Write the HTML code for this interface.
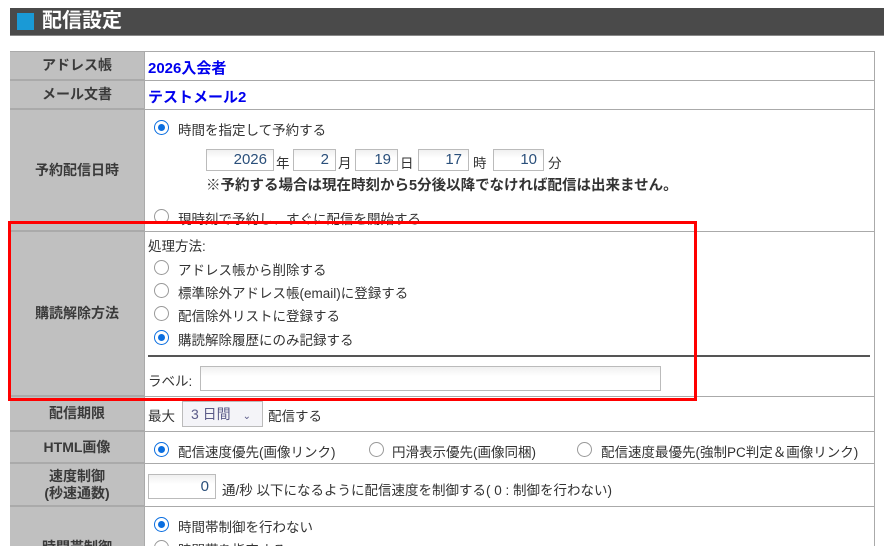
<!DOCTYPE html>
<html><head><meta charset="utf-8"><style>
html,body{margin:0;width:884px;height:546px;overflow:hidden}
body{background:#fff;font-family:"Liberation Sans","Noto Sans CJK JP",sans-serif;font-size:13.5px;color:#333;position:relative}
.a{position:absolute;white-space:nowrap}
.hdr{left:10px;top:8px;width:874px;height:27px;background:#4a4a4a;border-bottom:1px solid #888}
.sq{left:17px;top:13px;width:17px;height:17px;background:#1a9ad6}
.ht{left:42px;top:8px;color:#fff;font-size:20px;line-height:27px;font-weight:bold}
.lab{background:#c0c0c0;left:10px;width:134px;border-bottom:2px solid #aaa;font-weight:bold;font-size:14px;color:#3a3a3a;display:flex;align-items:center;justify-content:center;text-align:center;line-height:17px;box-sizing:border-box}
.val{left:144px;width:731px;border-bottom:1px solid #aaa;box-sizing:border-box;border-left:1px solid #aaa}
.r{position:absolute;width:13px;height:13px;border:1px solid #999;border-radius:50%;background:#fff}
.r.on{border-color:#0a6ee0}
.r.on::after{content:"";position:absolute;left:3px;top:3px;width:7px;height:7px;border-radius:50%;background:#0a6ee0}
.in{position:absolute;height:22px;border:1px solid #bbb;background:linear-gradient(#f0f0f0,#fff 40%);box-sizing:border-box;text-align:right;padding-right:6px;color:#2a4f7a;font-size:15px;line-height:20px}
.blue{color:#0000ee;font-weight:bold;font-size:15px}
</style></head><body>
<div class="a hdr"></div><div class="a sq"></div><div class="a ht">配信設定</div>
<div class="a" style="left:10px;top:51px;width:865px;height:495px;border:1px solid #aaa;border-bottom:none;box-sizing:border-box"></div>

<div class="a lab" style="top:52px;height:29px">アドレス帳</div>
<div class="a val" style="top:52px;height:29px"></div>
<div class="a blue" style="left:148px;top:57px">2026入会者</div>

<div class="a lab" style="top:81px;height:29px">メール文書</div>
<div class="a val" style="top:81px;height:29px"></div>
<div class="a blue" style="left:148px;top:86px">テストメール2</div>

<div class="a lab" style="top:110px;height:122px">予約配信日時</div>
<div class="a val" style="top:110px;height:122px"></div>
<span class="r on" style="left:154px;top:120px"></span>
<div class="a" style="left:178px;top:119px">時間を指定して予約する</div>
<div class="in" style="left:206px;top:149px;width:68px">2026</div><div class="a" style="left:276px;top:152px">年</div>
<div class="in" style="left:293px;top:149px;width:43px">2</div><div class="a" style="left:338px;top:152px">月</div>
<div class="in" style="left:355px;top:149px;width:43px">19</div><div class="a" style="left:400px;top:152px">日</div>
<div class="in" style="left:418px;top:149px;width:51px">17</div><div class="a" style="left:473px;top:152px">時</div>
<div class="in" style="left:493px;top:149px;width:51px">10</div><div class="a" style="left:548px;top:152px">分</div>
<div class="a" style="left:206px;top:174px;font-weight:bold;font-size:14.5px">※予約する場合は現在時刻から5分後以降でなければ配信は出来ません。</div>
<span class="r" style="left:154px;top:209px"></span>
<div class="a" style="left:178px;top:208px">現時刻で予約し、すぐに配信を開始する</div>

<div class="a lab" style="top:232px;height:165px">購読解除方法</div>
<div class="a val" style="top:232px;height:165px"></div>
<div class="a" style="left:148px;top:235px">処理方法:</div>
<span class="r" style="left:154px;top:260px"></span><div class="a" style="left:178px;top:259px">アドレス帳から削除する</div>
<span class="r" style="left:154px;top:283px"></span><div class="a" style="left:178px;top:282px">標準除外アドレス帳(email)に登録する</div>
<span class="r" style="left:154px;top:306px"></span><div class="a" style="left:178px;top:305px">配信除外リストに登録する</div>
<span class="r on" style="left:154px;top:330px"></span><div class="a" style="left:178px;top:329px">購読解除履歴にのみ記録する</div>
<div class="a" style="left:148px;top:355px;width:722px;height:2px;background:#555"></div>
<div class="a" style="left:148px;top:370px">ラベル:</div>
<div class="in" style="left:200px;top:366px;width:461px;height:25px"></div>

<div class="a lab" style="top:397px;height:35px">配信期限</div>
<div class="a val" style="top:397px;height:35px"></div>
<div class="a" style="left:148px;top:405px">最大</div>
<div class="a" style="left:182px;top:401px;width:81px;height:26px;border:1px solid #bbb;background:#f4f4f8;box-sizing:border-box;color:#5a5a88;font-size:14px;line-height:24px;padding-left:8px">3 日間 <span style="font-size:10px;margin-left:8px">&#8964;</span></div>
<div class="a" style="left:268px;top:405px">配信する</div>

<div class="a lab" style="top:432px;height:32px">HTML画像</div>
<div class="a val" style="top:432px;height:32px"></div>
<span class="r on" style="left:154px;top:442px"></span><div class="a" style="left:178px;top:441px">配信速度優先(画像リンク)</div>
<span class="r" style="left:369px;top:442px"></span><div class="a" style="left:392px;top:441px">円滑表示優先(画像同梱)</div>
<span class="r" style="left:577px;top:442px"></span><div class="a" style="left:601px;top:441px">配信速度最優先(強制PC判定＆画像リンク)</div>

<div class="a lab" style="top:464px;height:43px">速度制御<br>(秒速通数)</div>
<div class="a val" style="top:464px;height:43px"></div>
<div class="in" style="left:148px;top:474px;width:68px;height:25px;line-height:23px">0</div>
<div class="a" style="left:222px;top:479px">通/秒 以下になるように配信速度を制御する( 0 : 制御を行わない)</div>

<div class="a lab" style="top:507px;height:60px;border:none;align-items:flex-start;padding-top:32px">時間帯制御</div>
<div class="a val" style="top:507px;height:60px;border-bottom:none"></div>
<span class="r on" style="left:154px;top:517px"></span><div class="a" style="left:178px;top:516px">時間帯制御を行わない</div>
<span class="r" style="left:154px;top:540px"></span><div class="a" style="left:178px;top:539px">時間帯を指定する</div>

<div class="a" style="left:8px;top:221px;width:689px;height:180px;border:3px solid #f00;box-sizing:border-box"></div>
</body></html>
